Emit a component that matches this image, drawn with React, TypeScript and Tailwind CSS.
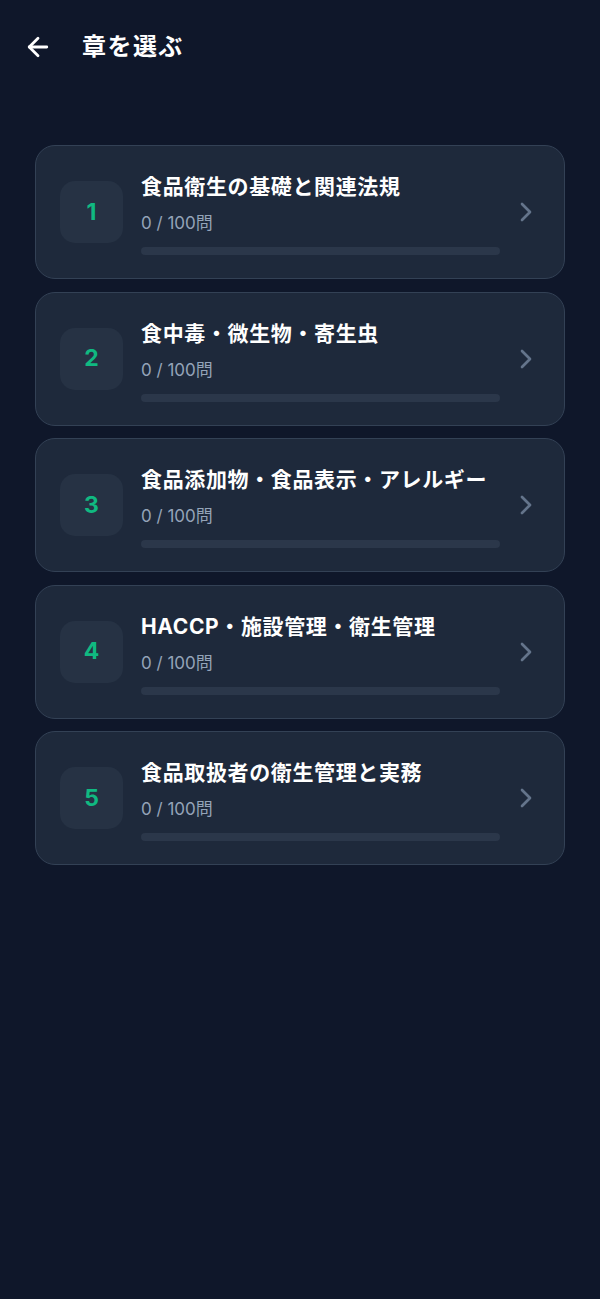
import { ArrowLeft, ChevronRight } from "lucide-react"

const chapters = [
  { no: 1, title: "食品衛生の基礎と関連法規", done: 0, total: 100 },
  { no: 2, title: "食中毒・微生物・寄生虫", done: 0, total: 100 },
  { no: 3, title: "食品添加物・食品表示・アレルギー", done: 0, total: 100 },
  { no: 4, title: "HACCP・施設管理・衛生管理", done: 0, total: 100 },
  { no: 5, title: "食品取扱者の衛生管理と実務", done: 0, total: 100 },
]

function ChapterCard({ chapter }: { chapter: (typeof chapters)[number] }) {
  const pct = (chapter.done / chapter.total) * 100

  return (
    <button className="flex h-[134px] w-full items-center rounded-[20px] border border-[#334155] bg-[#1e293b] pl-[24px] pr-[22px] text-left">
      <div className="flex h-[62px] w-[63px] shrink-0 items-center justify-center rounded-[15px] bg-[#263244]">
        <span className="text-[23px] font-bold text-[#10b981]">{chapter.no}</span>
      </div>
      <div className="ml-[18px] flex w-[359px] flex-col pt-[4px]">
        <h3 className="text-[21px] font-bold leading-[28px] tracking-[0.03em] text-white">
          {chapter.title}
        </h3>
        <p className="mt-[11px] text-[17px] leading-[22px] text-[#94a3b8]">
          {chapter.done} / {chapter.total}問
        </p>
        <div className="mt-[13px] h-[8px] w-full rounded-full bg-[#2b374a]">
          <div className="h-full rounded-full bg-[#10b981]" style={{ width: `${pct}%` }} />
        </div>
      </div>
      <ChevronRight className="ml-auto h-[32px] w-[32px] text-[#64748b]" strokeWidth={2} />
    </button>
  )
}

export default function App() {
  return (
    <div
      className="min-h-[1299px] w-full bg-[#0f172a]"
      style={{ fontFamily: 'Inter, "Noto Sans CJK JP", sans-serif' }}
    >
      {/* Header */}
      <header className="flex h-[94px] items-center px-[23px]">
        <ArrowLeft className="h-[30px] w-[30px] text-white" strokeWidth={2.25} />
        <h1 className="ml-[29px] text-[24px] font-bold tracking-[0.06em] text-white">章を選ぶ</h1>
      </header>

      {/* Chapter list */}
      <div className="mt-[51px] flex flex-col gap-[12.5px] px-[35px]">
        {chapters.map((c) => (
          <ChapterCard key={c.no} chapter={c} />
        ))}
      </div>
    </div>
  )
}
